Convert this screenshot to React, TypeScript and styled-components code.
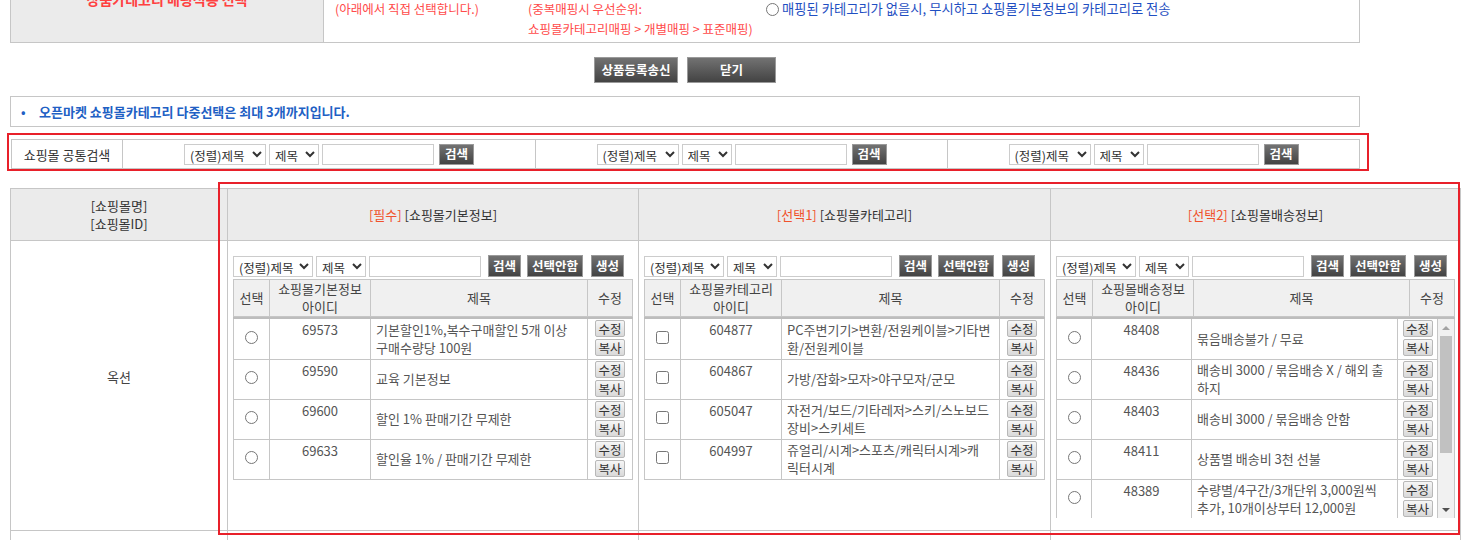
import React from "react";
import styled, { createGlobalStyle } from "styled-components";

const GlobalStyle = createGlobalStyle`
  html, body {
    margin: 0;
    padding: 0;
    overflow: hidden;
    background: #fff;
  }
  body {
    font-family: "Noto Sans CJK KR", "Liberation Sans", sans-serif;
    font-size: 13px;
    color: #333;
  }
  * {
    box-sizing: border-box;
  }
`;

type Row = { id: string; title: string };

const basicRows: Row[] = [
  { id: "69573", title: "기본할인1%,복수구매할인 5개 이상 구매수량당 100원" },
  { id: "69590", title: "교육 기본정보" },
  { id: "69600", title: "할인 1% 판매기간 무제한" },
  { id: "69633", title: "할인율 1% / 판매기간 무제한" },
];

const categoryRows: Row[] = [
  { id: "604877", title: "PC주변기기>변환/전원케이블>기타변환/전원케이블" },
  { id: "604867", title: "가방/잡화>모자>야구모자/군모" },
  { id: "605047", title: "자전거/보드/기타레저>스키/스노보드장비>스키세트" },
  { id: "604997", title: "쥬얼리/시계>스포츠/캐릭터시계>캐릭터시계" },
];

const shippingRows: Row[] = [
  { id: "48408", title: "묶음배송불가 / 무료" },
  { id: "48436", title: "배송비 3000 / 묶음배송 X / 해외 출하지" },
  { id: "48403", title: "배송비 3000 / 묶음배송 안함" },
  { id: "48411", title: "상품별 배송비 3천 선불" },
  { id: "48389", title: "수량별/4구간/3개단위 3,000원씩 추가, 10개이상부터 12,000원" },
  { id: "48372", title: "무료배송 / 제주 도서산간 추가" },
  { id: "48355", title: "배송비 2500 / 묶음배송" },
];

const Page = styled.div`
  padding: 0 7px 0 10px;
  margin-top: -27px;
`;

/* ---------- top option box ---------- */

const OptionBox = styled.div`
  display: grid;
  grid-template-columns: 313px 1fr;
  width: 1350px;
  border: 1px solid #c6c6c6;
`;

const OptionLabel = styled.div`
  background: #ebebeb;
  border-right: 1px solid #c6c6c6;
  color: #ff4040;
  font-size: 14px;
  font-weight: bold;
  line-height: 18px;
  text-align: center;
  padding-top: 16px;
`;

const OptionBody = styled.div`
  display: grid;
  grid-template-columns: 193px 238px 1fr;
  padding: 5px 11px 3px;
`;

const OptionColumn = styled.div`
  display: flex;
  flex-direction: column;
`;

const OptionLine = styled.div<{ $blue?: boolean }>`
  height: 20px;
  line-height: 20px;
  display: flex;
  align-items: center;
  gap: 3px;
  font-size: ${(p) => (p.$blue ? "13.3px" : "12.5px")};
  color: ${(p) => (p.$blue ? "#1f4fc2" : "#ff4b4b")};
  white-space: nowrap;
`;

const SmallRadio = styled.input`
  margin: 0;
  width: 13px;
  height: 13px;
`;

/* ---------- action buttons ---------- */

const ActionBar = styled.div`
  width: 1350px;
  display: flex;
  justify-content: center;
  gap: 9px;
  margin-top: 14px;
`;

const DarkButton = styled.button<{ $width: number; $height: number }>`
  width: ${(p) => p.$width}px;
  height: ${(p) => p.$height}px;
  padding: 0;
  border: 1px solid #9a9a9a;
  background: linear-gradient(#727272, #434343);
  color: #fff;
  font-family: inherit;
  font-size: 12.5px;
  font-weight: bold;
  line-height: 1;
  white-space: nowrap;
  cursor: pointer;
`;

/* ---------- notice ---------- */

const Notice = styled.div`
  margin-top: 13px;
  width: 1350px;
  height: 31px;
  border: 1px solid #c6c6c6;
  display: flex;
  align-items: center;
  padding-left: 10px;
  color: #2160c4;
  font-weight: bold;
`;

const Bullet = styled.span`
  width: 18px;
  font-size: 12px;
`;

/* ---------- common search ---------- */

const SearchFrame = styled.div`
  margin: 6px 0 0 -3px;
  width: 1362px;
  height: 38px;
  border: 2px solid #e8202a;
  padding: 4px 0 0 2px;
`;

const SearchTable = styled.div`
  display: grid;
  grid-template-columns: 110px 413px 412px 1fr;
  width: 1349px;
  height: 30px;
  border: 1px solid #c6c6c6;
`;

const SearchCell = styled.div<{ $first?: boolean }>`
  display: flex;
  align-items: center;
  justify-content: center;
  gap: 3px;
  border-left: ${(p) => (p.$first ? "none" : "1px solid #c6c6c6")};
  color: #333;
`;

const Select = styled.select<{ $width: number }>`
  width: ${(p) => p.$width}px;
  height: 21px;
  border: 1px solid #ccc;
  background: #fff;
  font-family: inherit;
  font-size: 12.5px;
  color: #333;
  padding: 0 0 0 1px;
  border-radius: 0;
`;

const TextInput = styled.input`
  width: 112px;
  height: 21px;
  border: 1px solid #ccc;
  padding: 0 3px;
  font-size: 12px;
  margin-right: 2px;
`;

/* ---------- main table ---------- */

const MainWrap = styled.div`
  position: relative;
  margin-top: 17px;
  width: 1450px;
`;

const Highlight = styled.div`
  position: absolute;
  left: 208px;
  top: -6px;
  width: 1242px;
  height: 353px;
  border: 2px solid #e8202a;
  pointer-events: none;
`;

const MainTable = styled.table`
  width: 1450px;
  border-collapse: collapse;
  table-layout: fixed;
`;

const MainHead = styled.th`
  height: 52px;
  padding: 0;
  background: #ebebeb;
  border: 1px solid #c6c6c6;
  font-weight: normal;
  font-size: 13px;
  line-height: 18px;
  color: #333;
  text-align: center;
`;

const Tag = styled.span`
  color: #f0522c;
`;

const MallCell = styled.td`
  height: 290px;
  border: 1px solid #c6c6c6;
  text-align: center;
  vertical-align: middle;
  padding: 0 0 18px;
  color: #444;
`;

const PanelCell = styled.td`
  height: 290px;
  border: 1px solid #c6c6c6;
  vertical-align: top;
  padding: 14px 5px 0 5px;
`;

/* ---------- panel ---------- */

const Toolbar = styled.div`
  display: flex;
  align-items: center;
  gap: 3px;
  height: 22px;
`;

const ToolButtons = styled.div`
  display: flex;
  gap: 6px;
  margin-left: 2px;
`;

const HeadWrap = styled.div`
  margin-top: 2px;
`;

const GridTable = styled.table`
  width: 100%;
  border-collapse: collapse;
  table-layout: fixed;
`;

const GridHead = styled.th`
  height: 37px;
  background: #f0f0f0;
  border: 1px solid #c6c6c6;
  font-weight: normal;
  font-size: 13px;
  line-height: 18px;
  color: #444;
  text-align: center;
  padding: 0;
`;

const BodyArea = styled.div<{ $height?: number }>`
  display: flex;
  border-top: 2px solid #bdbdbd;
  height: ${(p) => (p.$height ? `${p.$height}px` : "auto")};
`;

const Viewport = styled.div`
  flex: 1;
  min-width: 0;
  overflow: hidden;
`;

const ScrollTrack = styled.div`
  flex: 0 0 17px;
  display: flex;
  flex-direction: column;
  background: #f1f1f1;
  border-right: 1px solid #c6c6c6;
`;

const ScrollArrow = styled.div<{ $dir: "up" | "down" }>`
  height: 17px;
  display: flex;
  align-items: center;
  justify-content: center;
  &::before {
    content: "";
    border-left: 4px solid transparent;
    border-right: 4px solid transparent;
    ${(p) =>
      p.$dir === "up"
        ? "border-bottom: 4px solid #a3a3a3;"
        : "border-top: 4px solid #505050;"}
  }
`;

const ScrollThumb = styled.div<{ $height: number }>`
  height: ${(p) => p.$height}px;
  margin: 0 2px;
  background: #c1c1c1;
`;

const ScrollSpacer = styled.div`
  flex: 1;
`;

const GridCell = styled.td<{ $align: "center" | "left"; $valign: "top" | "middle" }>`
  height: 40px;
  border: 1px solid #c6c6c6;
  border-top: 0;
  text-align: ${(p) => p.$align};
  vertical-align: ${(p) => p.$valign};
  padding: ${(p) => (p.$valign === "top" ? "2px 0 0" : "0 8px 0 5px")};
  line-height: 18px;
  color: #555;
  word-break: break-all;
`;

const EditCell = styled.td`
  border: 1px solid #c6c6c6;
  border-top: 0;
  padding: 1px 0 2px;
  text-align: center;
`;

const MiniButtons = styled.div`
  display: flex;
  flex-direction: column;
  align-items: center;
  gap: 2px;
`;

const MiniButton = styled.button`
  width: 30px;
  height: 17px;
  padding: 0;
  border: 1px solid #b8b8b8;
  border-radius: 2px;
  background: linear-gradient(#f6f6f6, #d9d9d9);
  font-family: inherit;
  font-size: 12.5px;
  line-height: 15px;
  color: #333;
`;

const Pick = styled.input`
  margin: 0;
  width: 13px;
  height: 13px;
`;

function SearchGroup({ compact }: { compact?: boolean }) {
  return (
    <>
      <Select $width={compact ? 80 : 82} defaultValue="t">
        <option value="t">(정렬)제목</option>
        <option value="i">(정렬)아이디</option>
      </Select>
      <Select $width={50} defaultValue="t">
        <option value="t">제목</option>
        <option value="i">아이디</option>
      </Select>
      <TextInput type="text" />
    </>
  );
}

function Panel({
  idLabel,
  rows,
  kind,
  name,
  maxHeight,
}: {
  idLabel: string;
  rows: Row[];
  kind: "radio" | "checkbox";
  name: string;
  maxHeight?: number;
}) {
  const rowsTable = (
    <GridTable>
      <colgroup>
        <col style={{ width: maxHeight ? 35 : 36 }} />
        <col style={{ width: maxHeight ? 100 : 101 }} />
        <col />
        <col style={{ width: maxHeight ? 40 : 45 }} />
      </colgroup>
      <tbody>
        {rows.map((r) => (
          <tr key={r.id}>
            <GridCell $align="center" $valign="middle" style={{ padding: 0 }}>
              <Pick type={kind} name={name} />
            </GridCell>
            <GridCell $align="center" $valign="top">
              {r.id}
            </GridCell>
            <GridCell $align="left" $valign="middle">
              {r.title}
            </GridCell>
            <EditCell>
              <MiniButtons>
                <MiniButton>수정</MiniButton>
                <MiniButton>복사</MiniButton>
              </MiniButtons>
            </EditCell>
          </tr>
        ))}
      </tbody>
    </GridTable>
  );

  return (
    <>
      <Toolbar>
        <SearchGroup compact />
        <ToolButtons>
          <DarkButton $width={33} $height={22}>검색</DarkButton>
          <DarkButton $width={56} $height={22}>선택안함</DarkButton>
          <DarkButton $width={33} $height={22} style={{ marginLeft: 2 }}>
            생성
          </DarkButton>
        </ToolButtons>
      </Toolbar>
      <HeadWrap>
        <GridTable>
          <colgroup>
            <col style={{ width: 36 }} />
            <col style={{ width: 101 }} />
            <col />
            <col style={{ width: 45 }} />
          </colgroup>
          <thead>
            <tr>
              <GridHead>선택</GridHead>
              <GridHead>
                {idLabel}
                <br />
                아이디
              </GridHead>
              <GridHead>제목</GridHead>
              <GridHead>수정</GridHead>
            </tr>
          </thead>
        </GridTable>
      </HeadWrap>
      {maxHeight ? (
        <BodyArea $height={maxHeight}>
          <Viewport>{rowsTable}</Viewport>
          <ScrollTrack>
            <ScrollArrow $dir="up" />
            <ScrollThumb $height={117} />
            <ScrollSpacer />
            <ScrollArrow $dir="down" />
          </ScrollTrack>
        </BodyArea>
      ) : (
        <BodyArea>
          <Viewport>{rowsTable}</Viewport>
        </BodyArea>
      )}
    </>
  );
}

export default function App() {
  return (
    <>
      <GlobalStyle />
      <Page>
        <OptionBox>
          <OptionLabel>상품카테고리 매핑적용 선택</OptionLabel>
          <OptionBody>
            <OptionColumn>
              <OptionLine>
                <SmallRadio type="radio" name="map" /> 직접선택
              </OptionLine>
              <OptionLine>(아래에서 직접 선택합니다.)</OptionLine>
            </OptionColumn>
            <OptionColumn>
              <OptionLine>
                <SmallRadio type="radio" name="map" /> 매핑적용
              </OptionLine>
              <OptionLine>(중복매핑시 우선순위:</OptionLine>
              <OptionLine>쇼핑몰카테고리매핑 &gt; 개별매핑 &gt; 표준매핑)</OptionLine>
            </OptionColumn>
            <OptionColumn>
              <OptionLine $blue>
                <SmallRadio type="radio" name="skip" /> 매핑된 카테고리가 없을시, 전송하지 않음
              </OptionLine>
              <OptionLine $blue>
                <SmallRadio type="radio" name="skip" />
                매핑된 카테고리가 없을시, 무시하고 쇼핑몰기본정보의 카테고리로 전송
              </OptionLine>
            </OptionColumn>
          </OptionBody>
        </OptionBox>

        <ActionBar>
          <DarkButton $width={84} $height={26}>상품등록송신</DarkButton>
          <DarkButton $width={89} $height={26}>닫기</DarkButton>
        </ActionBar>

        <Notice>
          <Bullet>•</Bullet>
          오픈마켓 쇼핑몰카테고리 다중선택은 최대 3개까지입니다.
        </Notice>

        <SearchFrame>
          <SearchTable>
            <SearchCell $first>쇼핑몰 공통검색</SearchCell>
            {[0, 1, 2].map((i) => (
              <SearchCell key={i}>
                <SearchGroup />
                <DarkButton $width={35} $height={21}>검색</DarkButton>
              </SearchCell>
            ))}
          </SearchTable>
        </SearchFrame>

        <MainWrap>
          <MainTable>
            <colgroup>
              <col style={{ width: 217 }} />
              <col style={{ width: 411 }} />
              <col style={{ width: 412 }} />
              <col style={{ width: 410 }} />
            </colgroup>
            <thead>
              <tr>
                <MainHead>
                  [쇼핑몰명]
                  <br />
                  [쇼핑몰ID]
                </MainHead>
                <MainHead>
                  <Tag>[필수]</Tag> [쇼핑몰기본정보]
                </MainHead>
                <MainHead>
                  <Tag>[선택1]</Tag> [쇼핑몰카테고리]
                </MainHead>
                <MainHead>
                  <Tag>[선택2]</Tag> [쇼핑몰배송정보]
                </MainHead>
              </tr>
            </thead>
            <tbody>
              <tr>
                <MallCell>옥션</MallCell>
                <PanelCell>
                  <Panel idLabel="쇼핑몰기본정보" rows={basicRows} kind="radio" name="basic" />
                </PanelCell>
                <PanelCell>
                  <Panel idLabel="쇼핑몰카테고리" rows={categoryRows} kind="checkbox" name="cat" />
                </PanelCell>
                <PanelCell>
                  <Panel
                    idLabel="쇼핑몰배송정보"
                    rows={shippingRows}
                    kind="radio"
                    name="ship"
                    maxHeight={201}
                  />
                </PanelCell>
              </tr>
              <tr>
                <MallCell>G마켓</MallCell>
                <PanelCell />
                <PanelCell />
                <PanelCell />
              </tr>
            </tbody>
          </MainTable>
          <Highlight />
        </MainWrap>
      </Page>
    </>
  );
}
